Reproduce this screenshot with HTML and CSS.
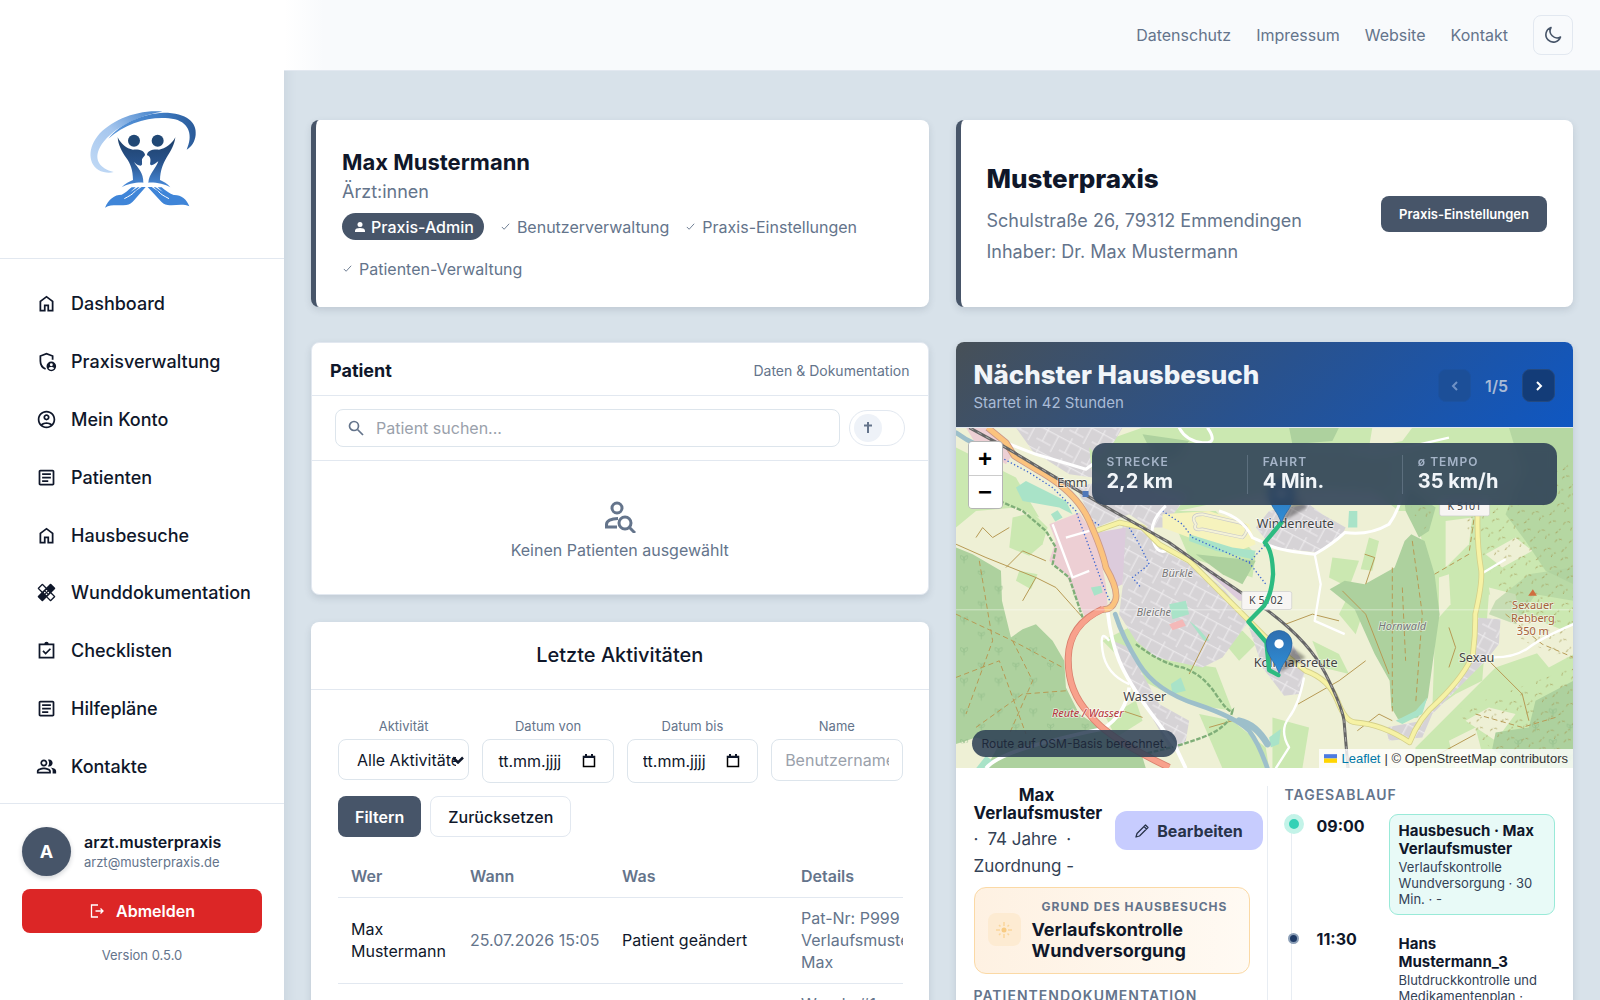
FILE: index.html
```html
<!DOCTYPE html>
<html lang="de">
<head>
<meta charset="utf-8">
<meta name="viewport" content="width=device-width, initial-scale=1">
<title>Dashboard – Musterpraxis</title>
<link rel="stylesheet" href="styles.css">
</head>
<body>
<div class="app">
  <aside class="sidebar">
    <a class="brand" href="#" aria-label="Startseite">
      <svg viewBox="-10 0 390 360" width="130" height="120" aria-hidden="true">
        <defs>
          <linearGradient id="arcLight" x1="0" y1="1" x2="1" y2="0"><stop offset="0" stop-color="#c3dbf6"/><stop offset=".5" stop-color="#a5c6ee"/><stop offset="1" stop-color="#3f7fc9"/></linearGradient>
          <linearGradient id="arcDark" x1="0" y1="0" x2="1" y2="0"><stop offset="0" stop-color="#5a97dc"/><stop offset=".6" stop-color="#3e7cc4"/><stop offset="1" stop-color="#2a5a98"/></linearGradient>
          <linearGradient id="body" x1="0" y1="110" x2="0" y2="262" gradientUnits="userSpaceOnUse"><stop offset="0" stop-color="#1d3f68"/><stop offset=".5" stop-color="#28528a"/><stop offset="1" stop-color="#4a8ddd"/></linearGradient>
        </defs>
        <path fill="url(#arcLight)" d="M246 35C170 28 90 62 52 108C18 150 24 205 70 216C82 219 93 218 100 216C58 206 42 180 56 148C74 104 150 50 246 35Z"/>
        <path fill="url(#arcDark)" d="M84 116C120 70 190 40 250 38C320 38 350 68 346 104C344 124 334 140 319 149C338 108 328 70 284 58C222 44 140 66 84 116Z"/>
        <circle cx="161" cy="122" r="18" fill="#214875"/><circle cx="232" cy="122" r="18" fill="#214875"/>
        <path fill="url(#body)" d="M112 112C122 132 138 146 158 149C178 147 192 153 194 164C194 168 187 172 185 178C184 188 188 196 181 197C172 196 166 192 161 186C172 204 190 218 189 248C172 246 140 252 124 262C134 250 148 244 158 240C158 210 150 190 138 174C124 154 114 136 112 112Z"/>
        <path fill="url(#body)" d="M285 112C275 132 255 146 236 149C216 147 200 153 200 166C208 168 212 176 210 186C208 192 210 196 214 196C222 194 228 188 234 184C226 206 206 222 204 248C222 246 254 252 270 262C262 250 248 244 239 240C240 210 248 192 258 174C272 152 282 136 285 112Z"/>
        <path fill="#3f85d8" d="M74 323C84 298 102 284 124 284C134 280 144 270 154 262H166L150 276L172 262H178L158 278L184 261H196L162 300C154 309 148 314 138 315C116 318 92 312 74 323Z"/>
        <path fill="#3f85d8" d="M327 319C318 296 302 284 280 285C266 281 254 270 244 262H232L248 276L226 262H220L240 278L214 261H202L236 298C246 310 252 315 262 315C284 318 306 310 327 319Z"/>
        <path stroke="#fff" stroke-width="3" fill="none" d="M132 296C146 288 156 284 164 274M266 296C252 288 242 284 234 274"/>
      </svg>
    </a>
    <nav class="nav" aria-label="Hauptnavigation">
      <a href="#"><svg class="ico" viewBox="0 -960 960 960"><path d="M240-200h120v-240h240v240h120v-360L480-740 240-560v360Zm-80 80v-480l320-240 320 240v480H520v-240h-80v240H160Z"/></svg>Dashboard</a>
      <a href="#"><svg class="ico" viewBox="0 0 24 24"><path fill="none" stroke="currentColor" stroke-width="2" d="M11 20.6C7.5 19.3 5 15.600 5 11.500V5.700L12 3l7 2.700V10"/><path fill-rule="evenodd" d="M17.500 12a5.500 5.500 0 1 0 0 11 5.500 5.500 0 0 0 0-11Zm0 2a1.700 1.700 0 1 1 0 3.400 1.700 1.700 0 0 1 0-3.400Zm0 7.300c-1.300 0-2.500-.6-3.100-1.700.6-.8 2-1.200 3.100-1.200s2.500.4 3.100 1.200c-.6 1.100-1.800 1.700-3.100 1.700Z"/></svg>Praxisverwaltung</a>
      <a href="#"><svg class="ico" viewBox="0 0 24 24"><path d="M12 2C6.480 2 2 6.480 2 12s4.480 10 10 10 10-4.480 10-10S17.520 2 12 2zM7.350 18.500C8.660 17.560 10.260 17 12 17s3.340.56 4.650 1.500C15.340 19.440 13.740 20 12 20s-3.340-.56-4.650-1.500zm10.790-1.380C16.450 15.800 14.320 15 12 15s-4.450.8-6.140 2.120C4.700 15.730 4 13.950 4 12c0-4.420 3.580-8 8-8s8 3.580 8 8c0 1.950-.7 3.730-1.860 5.120zM12 6c-1.930 0-3.500 1.570-3.500 3.500S10.070 13 12 13s3.500-1.570 3.500-3.500S13.930 6 12 6zm0 5c-.83 0-1.500-.67-1.500-1.500S11.170 8 12 8s1.500.67 1.500 1.500S12.830 11 12 11z"/></svg>Mein Konto</a>
      <a href="#"><svg class="ico" viewBox="0 0 24 24"><path d="M19 5v14H5V5h14m0-2H5c-1.100 0-2 .9-2 2v14c0 1.100.9 2 2 2h14c1.100 0 2-.9 2-2V5c0-1.100-.9-2-2-2zM14 17H7v-2h7v2zm3-4H7v-2h10v2zm0-4H7V7h10v2z"/></svg>Patienten</a>
      <a href="#"><svg class="ico" viewBox="0 -960 960 960"><path d="M240-200h120v-240h240v240h120v-360L480-740 240-560v360Zm-80 80v-480l320-240 320 240v480H520v-240h-80v240H160Z"/></svg>Hausbesuche</a>
      <a href="#"><svg class="ico" viewBox="0 0 24 24"><path fill-rule="evenodd" d="M17.730 12.020l3.980-3.980a1 1 0 0 0 0-1.410l-4.340-4.340a1 1 0 0 0-1.410 0l-3.980 3.980L8 2.290a1 1 0 0 0-1.410 0L2.250 6.630a1 1 0 0 0 0 1.410l3.980 3.980L2.250 16a1 1 0 0 0 0 1.410l4.340 4.340c.39.39 1.020.39 1.410 0l3.980-3.980 3.980 3.980c.2.2.45.29.71.29.26 0 .51-.1.71-.29l4.340-4.340a1 1 0 0 0 0-1.410l-3.990-3.980zM12 9c.55 0 1 .45 1 1s-.45 1-1 1-1-.45-1-1 .45-1 1-1zM10 13c-.55 0-1-.45-1-1s.45-1 1-1 1 .45 1 1-.45 1-1 1zm2 2c-.55 0-1-.45-1-1s.45-1 1-1 1 .45 1 1-.45 1-1 1zm2-4c.55 0 1 .45 1 1s-.45 1-1 1-1-.45-1-1 .45-1 1-1zm2.660 9.340l-3.630-3.620 3.630-3.630 3.620 3.620-3.620 3.630zM7.290 10.960L3.660 7.340l3.630-3.630 3.620 3.620-3.620 3.630z"/></svg>Wunddokumentation</a>
      <a href="#"><svg class="ico" viewBox="0 0 24 24"><g fill="none" stroke="currentColor" stroke-width="2"><path d="M4 5h16v15H4z"/><path d="M8 12.500l3 3 5.500-5.500"/></g><path d="M9.500 4.500a2.500 2.500 0 0 1 5 0Z"/></svg>Checklisten</a>
      <a href="#"><svg class="ico" viewBox="0 0 24 24"><path d="M19 5v14H5V5h14m0-2H5c-1.100 0-2 .9-2 2v14c0 1.100.9 2 2 2h14c1.100 0 2-.9 2-2V5c0-1.100-.9-2-2-2zM14 17H7v-2h7v2zm3-4H7v-2h10v2zm0-4H7V7h10v2z"/></svg>Hilfepläne</a>
      <a href="#"><svg class="ico" viewBox="0 0 24 24"><path fill-rule="evenodd" d="M16.670 13.130C18.040 14.060 19 15.320 19 17v3h4v-3c0-2.180-3.570-3.470-6.330-3.870zM15 12c2.210 0 4-1.790 4-4s-1.790-4-4-4c-.47 0-.91.1-1.330.24C14.500 5.270 15 6.580 15 8s-.5 2.730-1.330 3.760c.42.14.86.24 1.330.24zM9 12c2.210 0 4-1.790 4-4s-1.790-4-4-4-4 1.790-4 4 1.790 4 4 4zm0-6c1.100 0 2 .9 2 2s-.9 2-2 2-2-.9-2-2 .9-2 2-2zm0 7c-2.670 0-8 1.340-8 4v3h16v-3c0-2.660-5.330-4-8-4zm6 5H3v-.99C3.200 16.290 6.300 15 9 15s5.800 1.290 6 2v1z"/></svg>Kontakte</a>
    </nav>
    <div class="account">
      <div class="account-row">
        <span class="avatar">A</span>
        <div><div class="account-name">arzt.musterpraxis</div><div class="account-mail">arzt@musterpraxis.de</div></div>
      </div>
      <button class="logout" type="button"><svg viewBox="0 0 16 16" width="16" height="16"><path fill="none" stroke="currentColor" stroke-width="1.300" d="M9 2H2.500v12H9M6.500 8H14M11.500 5.500L14 8l-2.500 2.500"/></svg>Abmelden</button>
      <div class="version">Version 0.5.0</div>
    </div>
  </aside>

  <div class="page">
    <header class="topbar">
      <a href="#">Datenschutz</a><a href="#">Impressum</a><a href="#">Website</a><a href="#">Kontakt</a>
      <button class="theme" type="button" aria-label="Dunkles Design"><svg viewBox="0 0 20 20" width="20" height="20"><path fill="none" stroke="currentColor" stroke-width="1.600" stroke-linejoin="round" d="M8 2.500A7.500 7.500 0 1 0 17.500 12 7 7 0 0 1 8 2.500Z"/></svg></button>
    </header>

    <main class="content">
      <div class="intro">
        <section class="card accent profile">
          <h1>Max Mustermann</h1>
          <p class="role">Ärzt:innen</p>
          <ul class="rights">
            <li class="badge"><svg viewBox="0 0 12 12" width="12" height="12"><circle cx="6" cy="3.500" r="2.500" fill="currentColor"/><path fill="currentColor" d="M1 11V9.500C1 7.800 3.500 7 6 7s5 .8 5 2.500V11Z"/></svg>Praxis-Admin</li>
            <li><svg class="tick" viewBox="0 0 12 12"><path d="M2 6.500L4.500 9 10 3"/></svg>Benutzerverwaltung</li>
            <li><svg class="tick" viewBox="0 0 12 12"><path d="M2 6.500L4.500 9 10 3"/></svg>Praxis-Einstellungen</li>
            <li><svg class="tick" viewBox="0 0 12 12"><path d="M2 6.500L4.500 9 10 3"/></svg>Patienten-Verwaltung</li>
          </ul>
        </section>
        <section class="card accent practice">
          <div>
            <h2>Musterpraxis</h2>
            <p>Schulstraße 26, 79312 Emmendingen</p>
            <p>Inhaber: Dr. Max Mustermann</p>
          </div>
          <button class="btn-dark small" type="button">Praxis-Einstellungen</button>
        </section>
      </div>

      <div class="columns">
        <div class="stack">
          <section class="card patient">
            <div class="patient-head"><h2>Patient</h2><span>Daten &amp; Dokumentation</span></div>
            <div class="patient-search">
              <label class="search"><svg viewBox="0 0 18 18" width="18" height="18"><g fill="none" stroke="currentColor" stroke-width="1.700"><circle cx="7" cy="7" r="4.500"/><path d="M10.500 10.500L16 16"/></g></svg><input type="search" placeholder="Patient suchen..." aria-label="Patient suchen"></label>
              <label class="toggle"><input type="checkbox" aria-label="Verstorbene anzeigen"><span class="knob"><svg viewBox="0 0 12 12" width="12" height="12"><path fill="none" stroke="currentColor" stroke-width="2" d="M6 0v11M2 3.500h8"/></svg></span></label>
            </div>
            <div class="empty">
              <svg viewBox="0 0 32 32" width="32" height="32"><g fill="none" stroke="currentColor" stroke-width="3"><circle cx="13" cy="7" r="5"/><path d="M14 17.500C7 17.500 2.500 20 2.500 23.500V26H13"/><circle cx="21" cy="22" r="6"/><path d="M25.500 26.500L31 32"/></g></svg>
              <p>Keinen Patienten ausgewählt</p>
            </div>
          </section>

          <section class="card activity">
            <h2>Letzte Aktivitäten</h2>
            <div class="activity-body">
              <form class="filters">
                <div class="field"><label for="f-type">Aktivität</label><div class="select"><select id="f-type"><option>Alle Aktivitäten</option></select><svg viewBox="0 0 12 8" width="12" height="8"><path fill="none" stroke="#0f172a" stroke-width="2.500" d="M1 1.500L6 6.500 11 1.500"/></svg></div></div>
                <div class="field"><label for="f-from">Datum von</label><div class="date"><input id="f-from" type="text" placeholder="tt.mm.jjjj"><svg viewBox="0 0 14 14" width="14" height="14"><path fill="none" stroke="#000" stroke-width="1.500" d="M1.500 2.500h11v10h-11z"/><path d="M1 2h12v2H1zM3 0h2v2H3zM9 0h2v2H9z"/></svg></div></div>
                <div class="field"><label for="f-to">Datum bis</label><div class="date"><input id="f-to" type="text" placeholder="tt.mm.jjjj"><svg viewBox="0 0 14 14" width="14" height="14"><path fill="none" stroke="#000" stroke-width="1.500" d="M1.500 2.500h11v10h-11z"/><path d="M1 2h12v2H1zM3 0h2v2H3zM9 0h2v2H9z"/></svg></div></div>
                <div class="field"><label for="f-name">Name</label><input class="name" id="f-name" type="text" placeholder="Benutzername"></div>
                <div class="actions"><button class="btn-dark" type="button">Filtern</button><button class="btn-light" type="reset">Zurücksetzen</button></div>
              </form>
              <div class="table-wrap">
                <table>
                  <thead><tr><th class="c-who">Wer</th><th class="c-when">Wann</th><th class="c-what">Was</th><th class="c-details">Details</th></tr></thead>
                  <tbody>
                    <tr><td>Max Mustermann</td><td class="muted">25.07.2026 15:05</td><td>Patient geändert</td><td class="muted">Pat-Nr: P999<br>Verlaufsmuster,<br>Max</td></tr>
                    <tr><td>Max Mustermann</td><td class="muted">25.07.2026 15:04</td><td>Wunde geändert</td><td class="muted">Wunde #1<br>Pat-Nr: P999<br>Verlaufsmuster,<br>Max</td></tr>
                  </tbody>
                </table>
              </div>
            </div>
          </section>
        </div>

        <section class="card visit">
          <header class="visit-head">
            <div><h2>Nächster Hausbesuch</h2><p>Startet in 42 Stunden</p></div>
            <div class="pager">
              <button type="button" disabled aria-label="Vorheriger"><svg viewBox="0 0 12 12" width="12" height="12"><path d="M8 2L4 6l4 4"/></svg></button>
              <span>1/5</span>
              <button type="button" aria-label="Nächster"><svg viewBox="0 0 12 12" width="12" height="12"><path d="M4 2l4 4-4 4"/></svg></button>
            </div>
          </header>

          <div class="map">
            <svg class="map-canvas" viewBox="0 0 1854 1023" preserveAspectRatio="xMidYMid slice" role="img" aria-label="Karte">
              <defs>
                <pattern id="streets" width="76" height="68" patternUnits="userSpaceOnUse" patternTransform="rotate(28)"><rect width="76" height="68" fill="#d6d3d6"/><path d="M0 14H76M0 50H48M20 0V50M56 14V68" stroke="#f0eef0" stroke-width="3" fill="none"/></pattern>
                <pattern id="trees" width="104" height="92" patternUnits="userSpaceOnUse"><path d="M24 40v-22M24 30q-14-2-10-14 8 0 10 10M24 30q14-2 10-14-8 0-10 10M76 84v-20M76 74q-12-2-9-12 7 0 9 9M76 74q12-2 9-12-7 0-9 9" stroke="#94bf8b" stroke-width="2" fill="none"/></pattern>
                <pattern id="scrub" width="80" height="58" patternUnits="userSpaceOnUse" patternTransform="rotate(-18)"><path d="M4 12q10-8 22 0M44 28q12-10 24 2M14 46l18-8M60 52q4-10 16-8" stroke="#a59a55" stroke-width="2.500" stroke-dasharray="9 6" fill="none"/></pattern>
                <linearGradient id="pin" x1="0" y1="0" x2="0" y2="1"><stop offset="0" stop-color="#2e6fb0"/><stop offset="1" stop-color="#2f8fd8"/></linearGradient>
                <filter id="soft"><feGaussianBlur stdDeviation="5"/></filter>
              </defs>
              <rect width="1854" height="1023" fill="#eef0d5"/>
              <g fill="#cbe8b1">
                <path d="M0 60L100 110 180 150 250 270 180 240 60 250 0 300Z"/><path d="M170 270L230 255 275 300 260 350 220 385 160 360Z"/><path d="M270 90L390 60 560 0H1854V240L1640 250 1330 250 1250 190 1000 180 620 260 400 120Z"/>
                <path d="M1370 230L1854 220V620L1700 560 1600 500 1580 760 1500 800 1430 850 1440 560 1410 380Z"/><path d="M440 640L520 600 640 700 780 720 830 850 700 830 560 760Z"/><path d="M380 440L440 500 400 560 350 500Z"/>
                <path d="M1500 840L1620 720 1854 640V1023H1370L1380 960Z"/><path d="M1240 330L1270 340 1250 430 1215 425Z"/><path d="M1130 390L1210 400 1180 480 1120 450Z"/><path d="M1180 500L1220 560 1200 620 1150 560Z"/>
                <path d="M190 430L245 440 225 485 180 460Z"/><path d="M730 860L830 880 930 960 940 1023H800Z"/><path d="M450 870L540 820 560 880 480 930Z"/><path d="M800 640L860 610 900 650 850 700Z"/><path d="M640 250L780 250 900 380 890 450 700 390Z"/><path d="M950 870L1060 900 1040 1023H950Z"/><path d="M1070 640L1150 680 1180 740 1100 720Z"/>
              </g>
              <g fill="#eef0d5">
                <path d="M1250 0H1370L1340 40 1240 60Z"/><path d="M1470 280L1550 270 1540 350 1470 420Z"/><path d="M1590 380L1680 330 1730 370 1640 420Z"/><path d="M1600 480L1680 500 1690 560 1610 540Z"/><path d="M1730 660L1854 590V680L1780 720Z"/><path d="M1530 880L1600 840 1680 860 1620 940Z"/><path d="M1480 940L1560 900 1580 980 1500 1023Z"/><path d="M1450 450L1480 440 1485 530 1450 570Z"/>
              </g>
              <g fill="#add19e">
                <path d="M0 360L50 380 135 430 138 520 165 630 200 605 240 590 290 640 325 700 330 780 370 860 440 905 560 990 570 1023H90L130 950 60 930 0 950Z"/>
                <path d="M1367 320L1407 340 1437 440 1452 560 1432 700 1417 810 1387 870 1327 875 1307 840 1302 760 1257 680 1217 590 1197 545 1122 485 1167 460 1227 470 1317 420 1347 340Z"/>
                <path d="M1340 170L1440 240 1420 310 1390 330 1350 250Z"/><path d="M1000 0H1150L1130 40 1010 50Z"/><path d="M560 20L700 40 660 90 600 100Z"/>
                <path d="M1660 0H1854V470L1770 430 1710 340 1650 260 1700 130Z" opacity=".75"/><path d="M1854 760L1740 820 1720 900 1620 915 1610 965 1700 1023H1854Z"/><path d="M1600 560L1680 590 1740 500 1854 520V420L1720 440 1620 520Z" opacity=".6"/><path d="M720 380L900 400 860 470 800 440Z"/>
              </g>
              <path fill="url(#trees)" d="M0 360L135 430 165 630 290 640 330 780 440 905 0 950ZM1740 840H1854V1000H1640Z"/>
              <path fill="url(#scrub)" d="M1500 240L1854 100V700L1700 640 1590 400ZM1500 850L1854 720V960L1640 1000ZM980 80L1300 90 1290 200H1000ZM1340 170L1440 240 1400 320Z"/>
              <g fill="url(#streets)">
                <path d="M180 0H500L470 50 400 60 410 150 340 140 230 70Z"/><path d="M360 180L480 150 700 200 620 300 580 300 520 260 420 300Z"/><path d="M500 290L590 300 620 370 720 420 800 480 880 580 800 690 740 720 600 690 540 640 490 560 500 480Z"/>
                <path d="M900 300L940 250 1060 230 1100 260 1170 300 1160 320 1085 375 950 360Z"/><path d="M880 600L1010 650 1050 720 1030 800 985 805 920 720Z"/><path d="M470 640L520 660 560 740 610 830 700 880 690 940 650 980 600 890 520 760Z"/><path d="M1555 570L1635 575 1630 650 1590 700 1500 790 1430 860 1400 930 1300 940 1290 900 1400 880 1520 750 1560 660Z"/><path d="M440 0L480 20 430 90 400 60Z"/>
              </g>
              <g fill="#edcfd4"><path d="M280 290L370 255 420 330 450 470 455 530 390 575 370 530 330 440 280 400 300 340Z"/><path d="M30 0H90L170 80 150 110 60 50Z"/></g>
              <g fill="#dccbdc"><path d="M425 315L510 300 500 470 480 480 445 390Z"/><path d="M740 420L770 430 890 520 850 520Z"/></g>
              <path fill="#f6f3bd" d="M620 260L760 250 880 290 900 350 850 370 700 330 620 300Z"/>
              <path fill="none" stroke="#c9c9c9" stroke-width="10" d="M720 290Q700 260 740 260L850 285Q890 300 860 330L740 305Q710 310 720 290Z"/><path fill="none" stroke="#f4f2d8" stroke-width="6" d="M720 290Q700 260 740 260L850 285Q890 300 860 330L740 305Q710 310 720 290Z"/>
              <g fill="#a9e3c8"><path d="M180 180L210 160 330 220 350 260 310 240 200 220Z"/><path d="M285 260l20-12 15 22-22 12Z"/><path d="M700 320L830 360 900 370 890 395 780 370 700 340Z"/><path d="M640 530L690 520 700 560 650 575Z"/><path d="M645 770L675 750 690 790 650 800Z"/><path d="M1180 250h25v50h-28Z"/><path d="M1320 880L1380 850 1415 810 1400 860 1340 890Z"/><path d="M700 580L725 600 760 640 745 640Z"/><path d="M60 1023L90 985 110 1000 100 1023Z"/><path d="M940 930L975 905 970 950 945 960Z"/><path d="M405 480l30-5 5 20-25 10Z"/></g>
              <path fill="#f4b8b8" d="M640 590L680 575 690 595 650 608Z"/>
              <g fill="none" stroke="#b79a54" stroke-width="3">
                <path d="M0 350L90 390 240 450 300 480 380 570M60 330L80 300 110 330 160 300M150 420L200 370 270 400M200 520L240 450M440 905L500 850 560 870M1150 580L1070 560 990 590M1027 830L1150 760 1230 700M1205 910L1270 860 1310 880M1160 490L1230 560 1300 740M1227 380L1257 390 1230 470M1480 600L1500 660 1480 720M1600 700L1700 800 1720 880M1450 980L1560 920M700 740L760 620M760 900L830 880"/>
                <path d="M70 400L110 640 30 860M170 640L230 760 160 920M0 560L170 640 320 720M0 750L130 700 210 920M60 900L200 800 330 790M1310 420V860M1370 340L1400 560 1380 830M1340 480L1350 700M1437 440L1540 380 1560 240M1650 560L1760 650 1854 690M1560 860L1700 900 1800 870" stroke-dasharray="16 10"/>
              </g>
              <path fill="none" stroke="#7fae78" stroke-width="7" stroke-dasharray="14 5" d="M130 220L200 250 270 310 300 360 290 410 340 450 380 570M540 650Q620 710 680 720Q740 740 780 800T830 850Q820 900 740 930T560 980"/>
              <g fill="none" stroke="#9dbfca" stroke-linecap="round"><path stroke-width="14" d="M0 15Q60 60 130 70M478 560Q500 630 550 710Q600 790 720 830T880 910Q910 950 935 1023"/><path stroke-width="20" d="M850 880Q900 890 935 950"/></g>
              <g fill="none" stroke="#3d67d1" stroke-width="4" stroke-dasharray="4 7"><path d="M145 95L220 135 290 180 360 250 400 360 440 470 470 540M620 250L680 290 710 330 880 405 930 470M520 300L550 350 580 410 530 450 555 480M380 260L440 300M880 405L930 350"/></g>
              <g fill="none" stroke="#fff" stroke-linejoin="round"><path stroke-width="9" d="M150 45L240 80 390 125 410 110M670 0Q690 40 740 45T755 0M630 235Q580 280 590 330T630 370M790 250Q860 270 890 330L925 345Q960 370 1077 380Q1130 350 1167 315Q1240 325 1300 290 1330 250 1345 180"/><path stroke-width="11" d="M455 550Q465 640 490 700T580 850Q640 930 660 960L690 1023M90 1023Q120 985 250 950T440 905Q510 860 520 780"/><path stroke-width="7" d="M1077 380L1095 470 1077 580 1167 620M1615 690Q1680 690 1720 660T1854 590M1575 440L1650 395M1180 60L1260 80 1480 30M460 640Q430 600 440 670T520 770M1045 750Q1030 830 1000 870T1000 960L960 1023M290 290L350 450 400 430M330 330L400 310"/></g>
              <g fill="none" stroke-linejoin="round"><path stroke="#d4d08b" stroke-width="17" d="M420 310L490 285 560 300 610 350 700 400 790 490 880 580 960 660 1050 730Q1120 755 1145 820T1200 885Q1280 890 1362 945Q1390 870 1450 820Q1530 740 1552 680Q1560 620 1559 560 1580 470 1577 430 1562 340 1567 240"/><path stroke="#f6f2a5" stroke-width="12" d="M420 310L490 285 560 300 610 350 700 400 790 490 880 580 960 660 1050 730Q1120 755 1145 820T1200 885Q1280 890 1362 945Q1390 870 1450 820Q1530 740 1552 680Q1560 620 1559 560 1580 470 1577 430 1562 340 1567 240"/>
                <path stroke="#c98" stroke-width="20" d="M95 0L150 45 175 85 240 125Q360 190 400 280T450 420Q490 490 478 520T440 545"/><path stroke="#fbc37e" stroke-width="15" d="M95 0L150 45 175 85 240 125Q360 190 400 280T450 420Q490 490 478 520T440 545"/>
                <path stroke="#d9806e" stroke-width="21" d="M440 545Q340 590 337 690T400 860Q450 930 640 1020"/><path stroke="#f8a18c" stroke-width="16" d="M445 543Q340 590 337 690T400 860Q450 930 640 1020"/></g>
              <g fill="none"><path stroke="#666" stroke-width="9" d="M40 0L150 60 300 150 480 255 640 345 760 430 930 545Q1060 640 1110 740T1165 880L1177 1023"/><path stroke="#aaa" stroke-width="3" stroke-dasharray="14 14" d="M40 0L150 60 300 150 480 255 640 345 760 430 930 545Q1060 640 1110 740T1165 880L1177 1023"/></g>
              <path fill="#5077b8" d="M380 190h18v18h-18Z"/><path fill="#cf6f3f" d="M1718 505L1732 485 1744 505Z"/>
              <path stroke="#fff" stroke-opacity=".45" stroke-width="3" d="M0 547H1854"/>
              <g class="shield"><rect x="858" y="492" width="150" height="54" rx="6"/><rect x="1452" y="215" width="150" height="50" rx="6"/></g>
              <g class="place"><text x="303" y="177">Emm</text><text x="502" y="822">Wasser</text><text x="903" y="300">Windenreute</text><text x="894" y="718">Kollmarsreute</text><text x="1510" y="705">Sexau</text></g>
              <g class="place road"><text x="880" y="531">K 5102</text><text x="1476" y="248">K 5101</text></g>
              <g class="place area"><text x="618" y="448">Bürkle</text><text x="542" y="565">Bleiche</text><text x="1268" y="609">Hornwald</text></g>
              <text class="place stop" x="288" y="870">Reute / Wasser</text>
              <g class="place peak"><text x="1732" y="544">Sexauer</text><text x="1732" y="584">Rebberg</text><text x="1732" y="623">350 m</text></g>
              <path fill="none" stroke="#2cbb81" stroke-width="13" stroke-linejoin="round" stroke-linecap="round" d="M977 285L927 345Q950 365 952 440Q948 500 925 535L878 583 932 645 940 728 968 743"/>
              <g><path fill="#000" opacity=".35" filter="url(#soft)" d="M970 735L1010 660 1050 690Z"/><path fill="url(#pin)" stroke="#23609b" stroke-width="2" d="M970 737Q962 715 945 692Q931 670 931 648A39 39 0 0 1 1009 648Q1009 670 995 692Q978 715 970 737Z"/><circle cx="970" cy="649" r="14" fill="#fff"/></g>
              <g><path fill="#000" opacity=".35" filter="url(#soft)" d="M977 283L1017 208 1057 238Z"/><path fill="url(#pin)" stroke="#23609b" stroke-width="2" d="M977 285Q969 263 952 240Q938 218 938 196A39 39 0 0 1 1016 196Q1016 218 1002 240Q985 263 977 285Z"/><circle cx="977" cy="197" r="14" fill="#fff"/></g>
            </svg>
            <div class="zoom"><button type="button" aria-label="Vergrößern">+</button><button type="button" aria-label="Verkleinern">−</button></div>
            <dl class="stats">
              <div><dt>Strecke</dt><dd>2,2 km</dd></div>
              <div><dt>Fahrt</dt><dd>4 Min.</dd></div>
              <div><dt><span class="avg">ø</span> Tempo</dt><dd>35 km/h</dd></div>
            </dl>
            <div class="route-note">Route auf OSM-Basis berechnet.</div>
            <div class="attribution"><svg viewBox="0 0 12 8" width="13" height="9"><path fill="#4c7be1" d="M0 0h12v4H0z"/><path fill="#ffd500" d="M0 4h12v4H0z"/></svg><a href="#">Leaflet</a> | © OpenStreetMap contributors</div>
          </div>

          <div class="visit-body">
            <div class="visit-info">
              <div class="visit-patient">
                <div class="who"><h3>Max Verlaufsmuster</h3><p><span>·</span><span>74 Jahre</span><span>·</span></p><p>Zuordnung -</p></div>
                <button class="edit" type="button"><svg viewBox="0 0 16 16" width="16" height="16"><path fill="none" stroke="currentColor" stroke-width="1.300" stroke-linejoin="round" d="M2 14l1-3.500L11.500 2 14 4.500 5.500 13ZM10 3.500l2.500 2.500"/></svg>Bearbeiten</button>
              </div>
              <div class="reason">
                <span class="reason-icon"><svg viewBox="0 0 18 18" width="18" height="18"><circle cx="9" cy="9" r="2.500" fill="#f8cb83"/><path stroke="#fad69c" stroke-width="1.500" d="M9 1v4M9 13v4M1 9h4M13 9h4M4 4l1.500 1.500M12.500 12.500L14 14M14 4l-1.500 1.500M4 14l1.500-1.500"/></svg></span>
                <div><div class="eyebrow">Grund des Hausbesuchs</div><strong>Verlaufskontrolle Wundversorgung</strong></div>
              </div>
              <h4 class="section-label">Patientendokumentation</h4>
            </div>
            <div class="schedule">
              <h4 class="section-label">Tagesablauf</h4>
              <ol class="timeline">
                <li class="current"><span class="dot"></span><time>09:00</time><div class="slot"><strong>Hausbesuch · Max Verlaufsmuster</strong><p>Verlaufskontrolle Wundversorgung · 30 Min. · -</p></div></li>
                <li><span class="dot"></span><time>11:30</time><div class="slot"><strong>Hans Mustermann_3</strong><p>Blutdruckkontrolle und Medikamentenplan · 30&nbsp;Min. · -</p></div></li>
              </ol>
            </div>
          </div>
        </section>
      </div>
    </main>
  </div>
</div>
</body>
</html>
```
FILE: styles.css
```css
* { box-sizing: border-box; }
body { margin: 0; font-family: Inter, "Liberation Sans", sans-serif; font-size: 16px; color: #0f172a; background: #d8e2ea; }
h1, h2, h3, h4, p, ul, ol, dl, dd { margin: 0; padding: 0; }
ul, ol { list-style: none; }
a { color: inherit; text-decoration: none; }
button, input, select { font: inherit; color: inherit; }
button { cursor: pointer; }
svg { display: block; flex: none; fill: currentColor; }

.app { display: flex; height: 100vh; }

/* Sidebar */
.sidebar { display: flex; flex-direction: column; width: 284px; flex: none; background: #fff; overflow: hidden; }
.brand { display: flex; justify-content: center; padding: 100px 0 38px; border-bottom: 1px solid #e2e8f0; }
.nav { display: flex; flex-direction: column; flex: 1; min-height: 0; padding: 16px 0 8px; overflow: hidden; }
.nav a { display: flex; flex: 1; align-items: center; gap: 14px; padding-left: 36px; font-size: 18px; font-weight: 500; }
.ico { width: 21px; height: 21px; }
.account { padding: 23px 22px 22px; border-top: 1px solid #e2e8f0; }
.account-row { display: flex; align-items: center; gap: 13px; }
.avatar { display: grid; place-items: center; width: 49px; height: 49px; border-radius: 50%; background: #475569; color: #fff; font-size: 18px; font-weight: 700; box-shadow: 0 2px 5px rgba(15, 23, 42, .2); }
.account-name { font-weight: 600; line-height: 20px; }
.account-mail { font-size: 13px; line-height: 20px; color: #64748b; }
.logout { display: flex; align-items: center; justify-content: center; gap: 11px; width: 100%; height: 44px; margin: 13px 0 12px; border: 0; border-radius: 8px; background: #dc2626; color: #fff; font-weight: 600; }
.version { height: 33px; font-size: 13px; line-height: 20px; text-align: center; color: #64748b; }

/* Top bar */
.page { flex: 1; min-width: 0; display: flex; flex-direction: column; }
.topbar { display: flex; align-items: center; justify-content: flex-end; gap: 25px; height: 71px; flex: none; padding: 0 27px; background: linear-gradient(90deg, #fff, #f8fafc 40px); border-bottom: 1px solid #e2e8f0; color: #64748b; }
.theme { display: grid; place-items: center; width: 40px; height: 40px; border: 1px solid #e2e8f0; border-radius: 8px; background: transparent; color: #475569; }

.content { flex: 1; overflow: auto; scrollbar-width: none; padding: 49px 27px 26px; box-shadow: inset 14px 0 12px -12px rgba(71, 85, 105, .1); }
.intro, .columns { display: grid; grid-template-columns: minmax(0, 1fr) minmax(0, 1fr); gap: 27px; }
.intro { margin-bottom: 35px; }
.columns { align-items: start; }
.stack { display: flex; flex-direction: column; gap: 27px; }
.card { background: #fff; border-radius: 8px; box-shadow: 0 3px 7px rgba(51, 65, 85, .15); }
.accent { border-left: 5px solid #475569; }

.profile { padding: 27px 26px 25px; }
.profile h1 { font-size: 22px; line-height: 30px; font-weight: 700; }
.role { font-size: 18px; line-height: 29px; color: #64748b; }
.rights { display: flex; flex-wrap: wrap; gap: 15px 16px; margin-top: 7px; color: #64748b; }
.rights li { display: flex; align-items: center; gap: 6px; height: 27px; }
.rights .badge { gap: 5px; padding: 0 10px 0 12px; border-radius: 14px; background: #475569; color: #fff; font-weight: 500; }
.tick { width: 11px; height: 11px; fill: none; stroke: currentColor; stroke-width: 1; }
.practice { display: flex; align-items: center; justify-content: space-between; gap: 20px; padding: 26px; }
.practice h2 { margin-bottom: 8px; font-size: 26px; line-height: 36px; font-weight: 800; }
.practice p { font-size: 18px; line-height: 31px; color: #64748b; }
.btn-dark, .btn-light { height: 41px; padding: 0 17px; border: 0; border-radius: 8px; background: #475569; color: #fff; font-weight: 600; }
.btn-light { border: 1px solid #e2e8f0; background: #fff; color: #0f172a; font-weight: 500; }
.btn-dark.small { height: 36px; padding: 0 18px; font-size: 13px; }

/* Patient search */
.patient { border: 1px solid #e2e8f0; }
.patient-head { display: flex; align-items: center; justify-content: space-between; height: 53px; padding: 2px 18px 0; border-bottom: 1px solid #e2e8f0; }
.patient-head h2 { font-size: 18px; font-weight: 700; }
.patient-head span { font-size: 14px; color: #64748b; }
.patient-search { display: flex; align-items: center; gap: 9px; padding: 13px 23px; border-bottom: 1px solid #e2e8f0; }
.search { display: flex; align-items: center; gap: 9px; flex: 1; height: 38px; padding: 0 11px; border: 1px solid #dde5ec; border-radius: 8px; color: #64748b; }
.search input { flex: 1; min-width: 0; border: 0; outline: 0; background: none; }
.search input::placeholder, .name::placeholder { color: #9aa1ab; opacity: 1; }
.toggle { display: flex; align-items: center; width: 56px; height: 36px; padding: 4px; border: 1px solid #e2e8f0; border-radius: 18px; }
.toggle input { position: absolute; opacity: 0; }
.knob { display: grid; place-items: center; width: 28px; height: 28px; border-radius: 50%; background: #eef2f8; color: #64748b; }
.empty { display: flex; flex-direction: column; align-items: center; gap: 7px; padding: 40px 0 34px; color: #64748b; }
.empty p { line-height: 20px; }

/* Activity list */
.activity > h2 { height: 68px; border-bottom: 1px solid #e2e8f0; font-size: 20px; line-height: 67px; font-weight: 500; text-align: center; }
.activity-body { padding: 26px 26px 26px 27px; }
.filters { display: grid; grid-template-columns: repeat(4, minmax(0, 1fr)); gap: 13px; align-items: start; }
.field label { display: block; margin-bottom: 3px; font-size: 13px; line-height: 20px; color: #64748b; text-align: center; }
.select, .date, .name { width: 100%; border: 1px solid #dde5ec; border-radius: 8px; background: #fff; }
.select { display: flex; align-items: center; height: 41px; padding: 0 4px 0 18px; }
.select select { flex: 1; min-width: 0; padding: 0; border: 0; outline: 0; background: none; appearance: none; }
.select svg { margin-left: -4px; }
.date { display: flex; align-items: center; height: 44px; padding: 0 17px 0 15px; }
.date input { flex: 1; min-width: 0; width: 0; padding: 0; border: 0; outline: 0; background: none; }
.date input::placeholder { color: #0f172a; opacity: 1; }
.name { height: 42px; padding: 0 13px; }
.actions { grid-column: 1 / -1; display: flex; gap: 9px; }
.table-wrap { margin-top: 19px; overflow: hidden; }
table { width: 580px; border-collapse: collapse; table-layout: fixed; line-height: 22px; }
th { height: 41px; padding: 0 13px; text-align: left; font-weight: 600; color: #64748b; }
td { padding: 9px 13px 10px; }
tr { border-bottom: 1px solid #e2e8f0; }
.c-who { width: 119px; }
.c-when { width: 152px; }
.c-what { width: 179px; }
.muted { color: #64748b; }
td.muted { white-space: nowrap; }

/* Next visit */
.visit { overflow: hidden; }
.visit-head { display: flex; align-items: center; justify-content: space-between; height: 86px; padding: 2px 18px 0; border-bottom: 1px solid #e2e8f0; background: linear-gradient(135deg, #475057 0%, #29528e 50%, #0f57c2 100%); color: #f1f5f9; }
.visit-head h2 { font-size: 26px; line-height: 34px; font-weight: 800; }
.visit-head p { font-size: 15px; line-height: 22px; color: #a9bbd6; }
.pager { display: flex; align-items: center; gap: 14px; font-weight: 600; color: #a9bbd6; }
.pager button { display: grid; place-items: center; width: 33px; height: 33px; border: 1px solid #24497f; border-radius: 8px; background: #133c78; color: #fff; }
.pager button:disabled { border-color: #1c52a0; background: #1c4f98; color: #6f92c6; }
.pager path { fill: none; stroke: currentColor; stroke-width: 2; }

.map { position: relative; height: 340px; overflow: hidden; }
.map-canvas { width: 100%; height: 100%; }
.place { font-family: "Noto Sans", sans-serif; font-size: 38px; fill: #444; paint-order: stroke; stroke: #fff; stroke-opacity: .6; stroke-width: 5px; }
.road { font-size: 32px; }
.area { font-size: 33px; font-style: italic; fill: #777; }
.stop { font-size: 33px; font-style: italic; fill: #b5343c; }
.peak { font-size: 33px; fill: #a66238; text-anchor: middle; }
.shield { fill: #f7f5f3; stroke: #ccc; stroke-width: 2; }
.zoom { position: absolute; top: 13px; left: 12px; display: flex; flex-direction: column; border: 1px solid #b5b5b5; border-radius: 4px; overflow: hidden; }
.zoom button { width: 33px; height: 33px; padding: 0; border: 0; background: #fff; color: #000; font: bold 24px/30px "Liberation Sans", sans-serif; }
.zoom button + button { border-top: 1px solid #ccc; }
.stats { position: absolute; top: 15px; right: 16px; left: 136px; display: grid; grid-template-columns: repeat(3, 1fr); padding: 12px 0 11px; border-radius: 13px; background: rgba(43, 62, 84, .88); backdrop-filter: blur(4px); color: #f1f5f9; }
.stats div { height: 39px; padding-left: 15px; }
.stats div + div { border-left: 1px solid rgba(148, 163, 184, .35); }
.stats dt { font-size: 12px; line-height: 14px; font-weight: 600; letter-spacing: 1px; text-transform: uppercase; color: #a5b4c8; }
.avg { text-transform: none; }
.stats dd { font-size: 20px; line-height: 25px; font-weight: 700; }
.route-note { position: absolute; bottom: 11px; left: 16px; padding: 0 10px; border-radius: 14px; background: rgba(43, 62, 84, .86); color: #1e293b; font-size: 12px; line-height: 27px; }
.attribution { position: absolute; right: 0; bottom: 0; display: flex; align-items: center; gap: 4px; padding: 0 5px; background: rgba(255, 255, 255, .8); color: #333; font: 13px/19px "Liberation Sans", sans-serif; }
.attribution a { color: #0078a8; }

.visit-body { display: grid; grid-template-columns: 294px minmax(0, 1fr); padding: 18px; }
.visit-info { padding-right: 17px; border-right: 1px solid #e8edf3; }
.visit-patient { display: flex; align-items: flex-start; gap: 15px; color: #334155; }
.who { flex: none; width: 126px; }
.who h3 { font-size: 17px; line-height: 18px; font-weight: 700; text-align: center; color: #0f172a; }
.who p { display: flex; gap: 9px; font-size: 17px; line-height: 27px; white-space: nowrap; }
.who h3 + p { margin-top: 4px; }
.edit { display: flex; align-items: center; justify-content: center; gap: 7px; flex: none; width: 148px; height: 39px; margin-top: 25px; padding: 0; border: 0; border-radius: 12px; background: #c7ccfe; color: #28334a; font-weight: 700; }
.reason { display: flex; align-items: center; gap: 11px; height: 87px; margin: 7px 0 13px; padding: 0 13px 2px; border: 1px solid #fbd9a5; border-radius: 12px; background: linear-gradient(90deg, #fef1e2, #fffaf3); }
.reason-icon { display: grid; place-items: center; width: 33px; height: 33px; flex: none; border-radius: 8px; background: #fdebd2; }
.eyebrow { margin-bottom: 4px; padding-left: 10px; font-size: 12px; line-height: 16px; font-weight: 700; letter-spacing: 1px; text-transform: uppercase; white-space: nowrap; color: #64748b; }
.reason strong { display: block; font-size: 18px; line-height: 21px; font-weight: 700; }
.section-label { font-size: 14px; line-height: 18px; font-weight: 600; letter-spacing: 1px; text-transform: uppercase; white-space: nowrap; color: #64748b; }
.schedule { padding-left: 17px; }
.timeline { margin: 10px 0 0 6px; border-left: 1px solid #e8edf3; }
.timeline li { display: grid; grid-template-columns: 20px 85px minmax(0, 1fr); margin-left: -8px; margin-bottom: 12px; }
.timeline time { padding-left: 13px; font-size: 16px; line-height: 24px; font-weight: 700; }
.dot { justify-self: center; width: 11px; height: 11px; margin-top: 6px; border: 2px solid #8da0b8; border-radius: 50%; background: #1e3a66; }
.current .dot { width: 20px; height: 20px; margin-top: 0; border: 5px solid #c3f3e8; background: #34d1b6; }
.slot { padding: 7px 9px; border: 1px solid transparent; border-radius: 9px; }
.current .slot { border-color: #99ead8; background: #e8faf7; }
.slot strong { display: block; font-size: 15px; line-height: 18px; font-weight: 700; }
.slot p { margin-top: 1px; font-size: 13px; line-height: 16px; color: #334155; }
```
